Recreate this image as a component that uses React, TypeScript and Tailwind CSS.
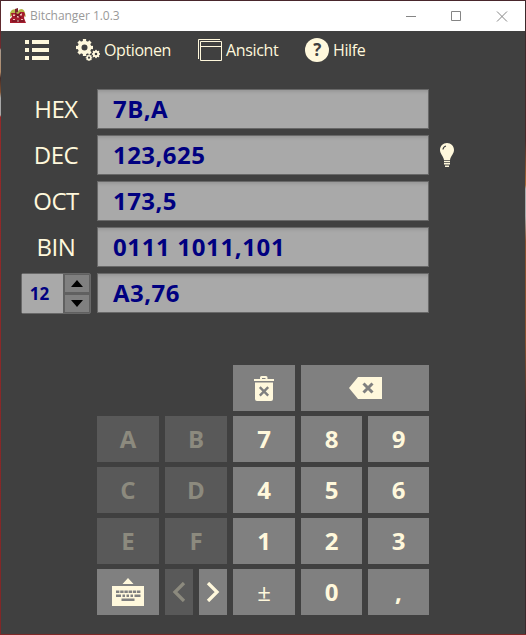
import type { ReactNode } from "react";

const cream = "#fff8dc";

function AppLogo() {
  return (
    <svg width="18" height="16" viewBox="0 0 18 16">
      <path d="M1 5C3 0 7 1 9 3C11 0 15 0 16 5L17 9L14 7L9 8L4 7L1 9Z" fill="#b5b84a" />
      <path d="M6 1L9 0L9 4L6 5Z" fill="#7c2230" />
      <path d="M2 5H7L9 6L11 4H15L16 6L15 10L17 15H1V11L3 9Z" fill="#a51c2d" />
      <path d="M4 6.5H6V8H4ZM11 5.5H13V7.5H11ZM8 8H10V9.5H8ZM4 11H6V12H4ZM12 11H14V12H12ZM8 12H10V14H8Z" fill="#f0c0b8" />
      <path d="M6 9L12 5M6 5L12 10M3 13H15" stroke="#661522" strokeWidth="1" />
    </svg>
  );
}

function Gear({ cx, cy, r, hole }: { cx: number; cy: number; r: number; hole: number }) {
  return (
    <g transform={`translate(${cx} ${cy})`}>
      <circle r={(r + hole) / 2} fill="none" stroke={cream} strokeWidth={r - hole} />
      {[0, 45, 90, 135, 180, 225, 270, 315].map((a) => (
        <rect key={a} x={-r * 0.24} y={-r * 1.25} width={r * 0.48} height={r * 0.4} fill={cream} transform={`rotate(${a})`} />
      ))}
    </g>
  );
}

function Menu({ icon, label, className }: { icon: ReactNode; label: string; className: string }) {
  return (
    <button className={`flex h-6 items-center whitespace-nowrap text-left ${className}`}>
      {icon}
      <span>{label}</span>
    </button>
  );
}

function Row({ label, value, children }: { label?: string; value: string; children?: ReactNode }) {
  return (
    <div className="flex h-10 items-center">
      <div className="mr-1.5 w-[70px] text-center text-[24px] leading-10 tracking-[-0.45px]">{children ?? label}</div>
      <div
        className={`h-10 w-[332px] border border-[#686868] bg-[#a9a9a9] pl-[15px] text-[24px] leading-[38px] font-bold text-[#000080] shadow-[inset_0_3px_3px_-1px_#989898] ${label === "BIN" ? "tracking-[0.64px]" : "tracking-[0.45px]"}`}
      >
        {value}
      </div>
      {label === "DEC" && (
        <svg className="mt-px ml-[11px]" width="14" height="25" viewBox="0 0 14 25">
          <path d="M7 0C3 0 0 3 0 7C0 11 3 12 4 17H10C11 12 14 11 14 7C14 3 11 0 7 0Z" fill={cream} />
          <path d="M3 6.5C3.2 4.5 4.2 3.5 6 3" stroke="#404040" strokeWidth="1.2" fill="none" />
          <path d="M4 18.5H10M4 20.8H10M5 23.2H9" stroke={cream} strokeWidth="1.4" />
        </svg>
      )}
    </div>
  );
}

function Key({ children, disabled, className = "font-bold" }: { children: ReactNode; disabled?: boolean; className?: string }) {
  return (
    <button
      disabled={disabled}
      className={`flex h-[46px] items-center justify-center text-[24px] leading-none ${disabled ? "bg-[#595959] text-[#8c8a7e]" : "bg-[#808080] text-[#fff8dc]"} ${className}`}
    >
      {children}
    </button>
  );
}

function Chevron({ left }: { left?: boolean }) {
  return (
    <svg width="14" height="20" viewBox="0 0 14 20" fill="none" stroke="currentColor" strokeWidth="3.3">
      <path d={left ? "M12 1L3 10L12 19" : "M2 1L11 10L2 19"} />
    </svg>
  );
}

export default function App() {
  return (
    <div className="flex h-[635px] w-[526px] flex-col bg-[linear-gradient(to_bottom,#512a2e_0px,#712a2e_48px,#a89a8d_50px,#b28a68_72px,#442b28_78px,#805131_92px,#a8a8a8_98px,#a8a8a8_115px,#942929_117px,#802727_635px)] pl-px font-['Open_Sans','Noto_Sans',sans-serif] text-[#fff8dc]">
      <div className="h-px shrink-0 bg-[#49262c]" />
      <div className="flex min-h-0 flex-1 bg-[linear-gradient(to_bottom,#3a292c_0px,#4a2828_140px,#a86a35_184px,#a8a8a8_188px,#a8a8a8_215px,#86502f_240px,#86502f_340px,#3a292c_420px)] pr-px">
        <div className="flex flex-1 flex-col bg-[#404040]">
          <header className="flex h-[30px] shrink-0 items-center bg-white pl-2 text-[#999999]">
            <AppLogo />
            <span className="ml-[3px] text-[12px] tracking-[-0.05px]">Bitchanger 1.0.3</span>
            <svg className="mr-[17px] ml-auto" width="102" height="11" viewBox="0 0 102 11" fill="none" stroke="#858585">
              <path d="M0 5.5H10M45.5 0.5H54.5V9.5H45.5ZM91 .5L101 10.5M101 .5L91 10.5" />
            </svg>
          </header>
          <nav className="mt-[7px] flex h-6 shrink-0 items-center pl-6 text-[16px] leading-6">
            <svg width="24" height="20" viewBox="0 0 24 20" fill={cream}>
              <path d="M0 0H4V4H0ZM7 0H24V4H7ZM0 8H4V12H0ZM7 8H24V12H7ZM0 16H4V20H0ZM7 16H24V20H7Z" />
            </svg>
            <Menu
              className="ml-[27px] w-[122px] gap-[4px] tracking-[-0.4px]"
              label="Optionen"
              icon={
                <svg width="24" height="22" viewBox="0 0 24 22">
                  <Gear cx={8.5} cy={8.5} r={6.8} hole={3} />
                  <Gear cx={20} cy={15} r={3.3} hole={1.3} />
                  <Gear cx={13} cy={18.7} r={2.6} hole={1.1} />
                </svg>
              }
            />
            <Menu
              className="w-[107px] gap-[4px] tracking-[-0.35px]"
              label="Ansicht"
              icon={
                <svg width="24" height="22" viewBox="0 0 24 22" fill="none" stroke={cream}>
                  <path d="M0.5 20V0.5H22M2.5 2.5H23.5V21.5H2.5ZM2.5 7.5H23.5" />
                </svg>
              }
            />
            <Menu
              className="gap-[4px] tracking-[-0.4px]"
              label="Hilfe"
              icon={
                <span className="flex size-6 items-center justify-center rounded-full bg-[#fff8dc] text-[17px] leading-6 font-bold text-[#404040]">?</span>
              }
            />
          </nav>
          <main className="pt-[27px] pl-5">
            <section className="flex flex-col gap-1.5">
              <Row label="HEX" value="7B,A" />
              <Row label="DEC" value="123,625" />
              <Row label="OCT" value="173,5" />
              <Row label="BIN" value="0111 1011,101" />
              <Row value="A3,76">
                <div className="flex h-[41px] w-[70px] rounded-[2px] border border-[#686868] bg-[#606060]">
                  <div className="w-[41px] bg-[#a9a9a9] pr-[6px] text-[17px] leading-[39px] font-bold tracking-normal text-[#000080]">12</div>
                  <div className="flex flex-1 flex-col gap-[3px] py-px pr-px pl-[2px]">
                    {[true, false].map((up) => (
                      <button key={String(up)} className="flex flex-1 items-center justify-center bg-[#808080]">
                        <svg width="12" height="7" viewBox="0 0 12 7">
                          <path d={up ? "M0 7L6 0L12 7Z" : "M0 0L6 7L12 0Z"} fill="#000" />
                        </svg>
                      </button>
                    ))}
                  </div>
                </div>
              </Row>
            </section>
            <section className="mt-[52px] ml-[76px] grid w-[332px] grid-cols-[62px_62px_62px_61px_61px] gap-x-1.5 gap-y-[5px]">
              <Key className="col-start-3">
                <svg width="22" height="25" viewBox="0 0 22 25">
                  <path d="M1 3H7V1.5Q7 0 8.5 0H13Q14.5 0 14.5 1.5V3H21V5H1ZM9 2V3H12.5V2ZM2 6.5H20V23Q20 25 18 25H4Q2 25 2 23Z" fill={cream} />
                  <path d="M6.8 11.2L15.2 19.6M15.2 11.2L6.8 19.6" stroke="#808080" strokeWidth="2.4" />
                </svg>
              </Key>
              <Key className="col-span-2">
                <svg width="33" height="22" viewBox="0 0 33 22">
                  <path d="M0 11L9 0H33V22H9Z" fill={cream} />
                  <path d="M14.5 6.5L23.5 15.5M23.5 6.5L14.5 15.5" stroke="#808080" strokeWidth="3" />
                </svg>
              </Key>
              <Key disabled>A</Key>
              <Key disabled>B</Key>
              <Key>7</Key>
              <Key>8</Key>
              <Key>9</Key>
              <Key disabled>C</Key>
              <Key disabled>D</Key>
              <Key>4</Key>
              <Key>5</Key>
              <Key>6</Key>
              <Key disabled>E</Key>
              <Key disabled>F</Key>
              <Key>1</Key>
              <Key>2</Key>
              <Key>3</Key>
              <Key>
                <svg width="34" height="28" viewBox="0 0 34 28">
                  <path d="M17 0L22.5 6H11.5ZM1 8H33V28H1Z" fill={cream} />
                  <path d="M5 13.7H29.5" stroke="#808080" strokeWidth="2.4" strokeDasharray="3.4 .8" />
                  <path d="M5 17.7H10M11.5 17.7H14M15.5 17.7H18M19.5 17.7H22M23.5 17.7H29.5M10.5 21.8H23.5" stroke="#808080" strokeWidth="2.4" />
                </svg>
              </Key>
              <div className="grid grid-cols-2 gap-1.5">
                <Key disabled>
                  <Chevron left />
                </Key>
                <Key>
                  <Chevron />
                </Key>
              </div>
              <Key className="font-medium">±</Key>
              <Key>0</Key>
              <Key>,</Key>
            </section>
          </main>
        </div>
      </div>
      <div className="h-px shrink-0 bg-[#802727]" />
    </div>
  );
}
